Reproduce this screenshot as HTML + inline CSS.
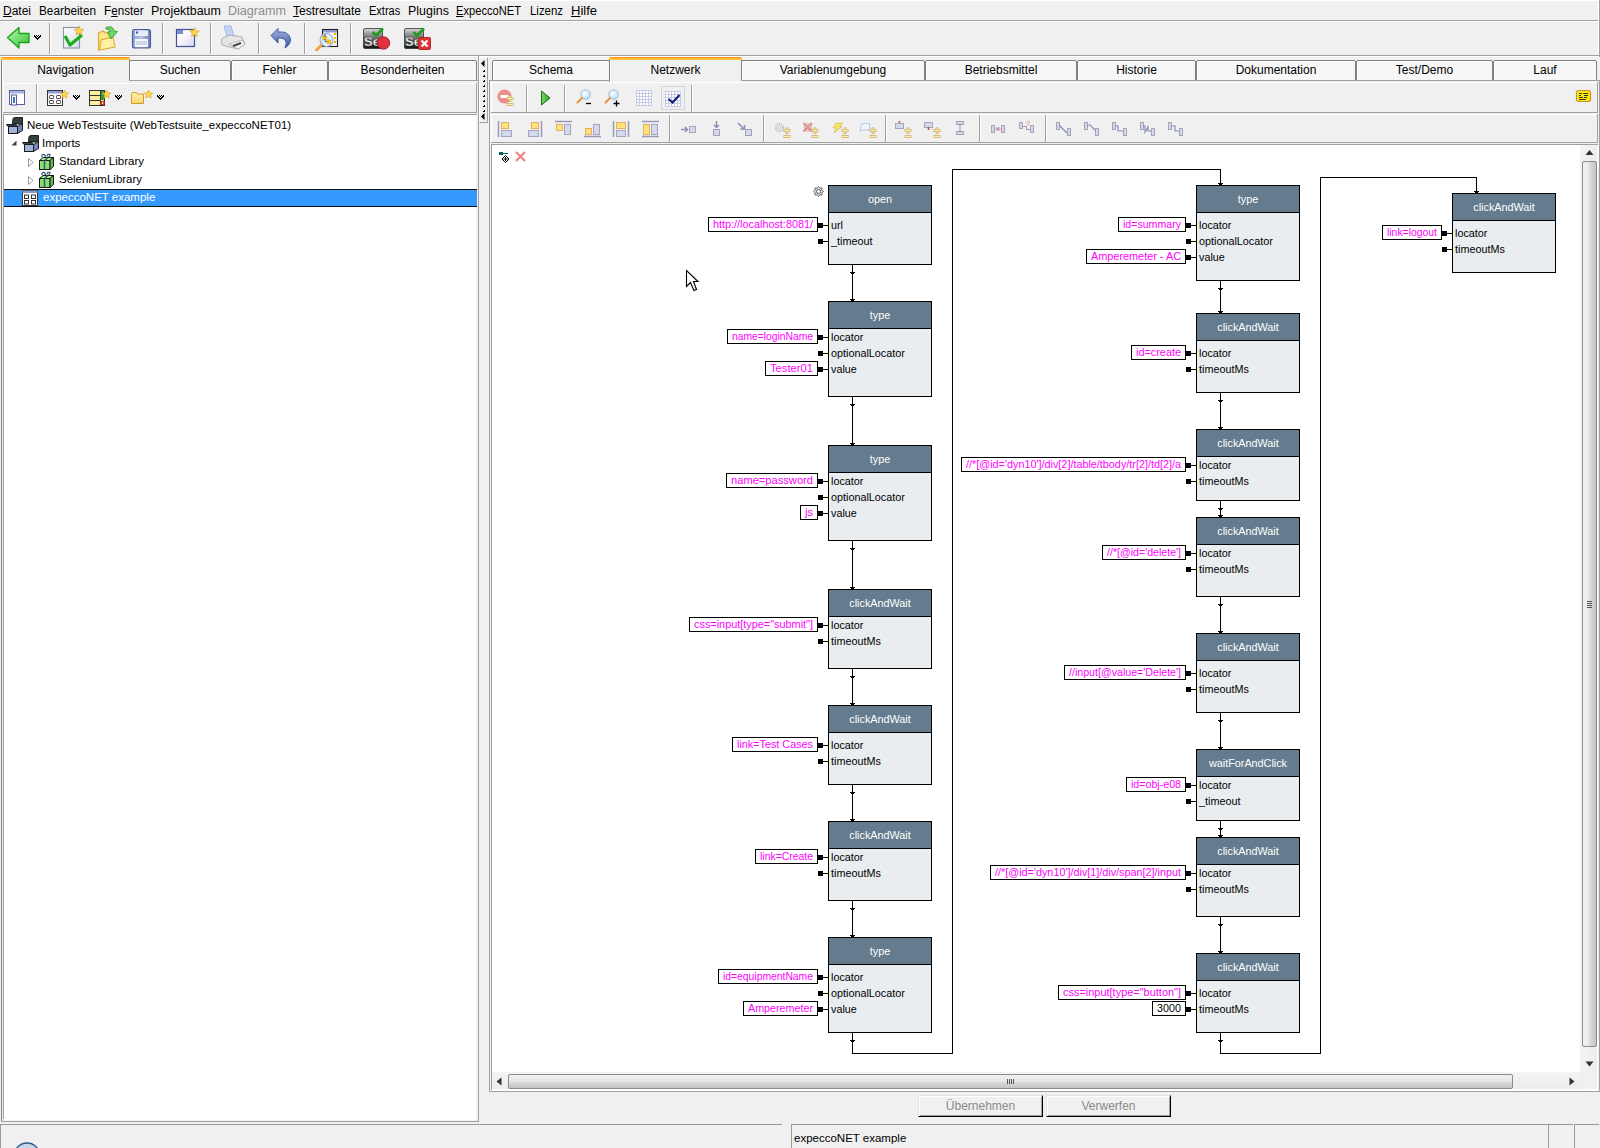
<!DOCTYPE html><html><head><meta charset="utf-8"><style>
*{margin:0;padding:0;box-sizing:border-box}
html,body{width:1600px;height:1148px;overflow:hidden;background:#f0f0f0}
body{position:relative;font-family:"Liberation Sans",sans-serif;font-size:11.5px;color:#000}
div{position:absolute}
.t{white-space:pre;line-height:14px}
svg{position:absolute;left:0;top:0;overflow:visible}
u{text-decoration:underline}
.mn{font-size:11.6px}
</style></head><body>
<div style="left:0px;top:0px;width:1600px;height:1px;background:#fff"></div>
<div style="left:0px;top:20px;width:1600px;height:1px;background:#a0a0a0"></div>
<div style="left:0px;top:21px;width:1600px;height:1px;background:#fff"></div>
<div style="left:3px;top:3px;width:200px;height:16px;line-height:16px;white-space:pre;font-size:12px;transform-origin:0 0;transform:scaleX(1.0)"><u>D</u>atei</div>
<div style="left:39px;top:3px;width:200px;height:16px;line-height:16px;white-space:pre;font-size:12px;transform-origin:0 0;transform:scaleX(0.982)">Bearbeiten</div>
<div style="left:104px;top:3px;width:200px;height:16px;line-height:16px;white-space:pre;font-size:12px;transform-origin:0 0;transform:scaleX(0.974)">F<u>e</u>nster</div>
<div style="left:151px;top:3px;width:200px;height:16px;line-height:16px;white-space:pre;font-size:12px;transform-origin:0 0;transform:scaleX(1.038)">Projektbaum</div>
<div style="left:228px;top:3px;width:200px;height:16px;line-height:16px;white-space:pre;font-size:12px;transform-origin:0 0;transform:scaleX(1.047)"><span style="color:#8d8d8d">Diagramm</span></div>
<div style="left:293px;top:3px;width:200px;height:16px;line-height:16px;white-space:pre;font-size:12px;transform-origin:0 0;transform:scaleX(1.0)"><u>T</u>estresultate</div>
<div style="left:369px;top:3px;width:200px;height:16px;line-height:16px;white-space:pre;font-size:12px;transform-origin:0 0;transform:scaleX(0.919)">Extras</div>
<div style="left:408px;top:3px;width:200px;height:16px;line-height:16px;white-space:pre;font-size:12px;transform-origin:0 0;transform:scaleX(1.038)">Plugins</div>
<div style="left:456px;top:3px;width:200px;height:16px;line-height:16px;white-space:pre;font-size:12px;transform-origin:0 0;transform:scaleX(0.928)"><u>E</u>xpeccoNET</div>
<div style="left:530px;top:3px;width:200px;height:16px;line-height:16px;white-space:pre;font-size:12px;transform-origin:0 0;transform:scaleX(0.951)">Lizenz</div>
<div style="left:571px;top:3px;width:200px;height:16px;line-height:16px;white-space:pre;font-size:12px;transform-origin:0 0;transform:scaleX(1.087)"><u>H</u>ilfe</div>
<div style="left:0px;top:55px;width:1600px;height:1px;background:#a0a0a0"></div>
<div style="left:0px;top:56px;width:1600px;height:1px;background:#fff"></div>
<div style="left:1599px;top:0px;width:1px;height:57px;background:#a0a0a0"></div>
<div style="left:1598px;top:1px;width:1px;height:54px;background:#fff"></div>
<div style="left:49px;top:23px;width:1px;height:31px;background:#a0a0a0"></div>
<div style="left:50px;top:23px;width:1px;height:31px;background:#fff"></div>
<div style="left:162px;top:23px;width:1px;height:31px;background:#a0a0a0"></div>
<div style="left:163px;top:23px;width:1px;height:31px;background:#fff"></div>
<div style="left:210px;top:23px;width:1px;height:31px;background:#a0a0a0"></div>
<div style="left:211px;top:23px;width:1px;height:31px;background:#fff"></div>
<div style="left:258px;top:23px;width:1px;height:31px;background:#a0a0a0"></div>
<div style="left:259px;top:23px;width:1px;height:31px;background:#fff"></div>
<div style="left:304px;top:23px;width:1px;height:31px;background:#a0a0a0"></div>
<div style="left:305px;top:23px;width:1px;height:31px;background:#fff"></div>
<div style="left:350px;top:23px;width:1px;height:31px;background:#a0a0a0"></div>
<div style="left:351px;top:23px;width:1px;height:31px;background:#fff"></div>
<svg style="left:6px;top:26px" width="25" height="25" viewBox="0 0 25 25"><defs><linearGradient id="ga" x1="0" y1="0" x2="1" y2="1"><stop offset="0" stop-color="#b8f5b0"/><stop offset="0.6" stop-color="#6cd868"/><stop offset="1" stop-color="#3cbc3a"/></linearGradient></defs><path d="M1.5 11.5 L13 1.5 L13 7.5 L23 7.5 L23 16.5 L13 16.5 L13 22 Z" fill="url(#ga)" stroke="#14a414" stroke-width="1.3" stroke-linejoin="round"/></svg>
<svg style="left:34px;top:35px" width="7" height="5" viewBox="0 0 7 5"><path d="M0 0h1v1h-1zM2 0h1v1h-1zM4 0h1v1h-1zM6 0h1v1h-1zM0 1h1v1h-1zM1 1h1v1h-1zM3 1h1v1h-1zM5 1h1v1h-1zM6 1h1v1h-1zM1 2h1v1h-1zM2 2h1v1h-1zM4 2h1v1h-1zM5 2h1v1h-1zM2 3h1v1h-1zM3 3h1v1h-1zM4 3h1v1h-1zM3 4h1v1h-1z" fill="#000" shape-rendering="crispEdges"/></svg>
<svg style="left:62px;top:26px" width="24" height="24" viewBox="0 0 24 24"><defs><linearGradient id="gd" x1="0" y1="0" x2="1" y2="1"><stop offset="0" stop-color="#ffffff"/><stop offset="1" stop-color="#dcdcea"/></linearGradient></defs><rect x="1.5" y="1.5" width="16" height="20.5" fill="url(#gd)" stroke="#7f97ad" stroke-width="1.1"/><path d="M3 10 L8 19 L20 9" stroke="#19b019" stroke-width="3.2" fill="none" stroke-linejoin="round"/><polygon points="17.0,0.0 18.3,3.2 21.8,3.5 19.1,5.7 19.9,9.0 17.0,7.2 14.1,9.0 14.9,5.7 12.2,3.5 15.7,3.2" fill="#ffd84a" stroke="#e0a020" stroke-width="0.7"/></svg>
<svg style="left:97px;top:25px" width="24" height="26" viewBox="0 0 24 26"><path d="M1.5 8 L6 6 L9 8 L14 8 L15 20 L1.5 25 Z" fill="#fce58a" stroke="#e0aa30" stroke-width="1.1"/><path d="M2.5 25 L4 15 L16 12 L18 22 Z" fill="#fff0a8" stroke="#e0aa30" stroke-width="1.1"/><path d="M9 2.5 Q16 0 17 6 L20.5 6.5 L14 14 L10.5 7 L13.5 6.5 Q13 3.5 9 4 Z" fill="#6fd66a" stroke="#2c9a2a" stroke-width="0.9"/></svg>
<svg style="left:131px;top:28px" width="22" height="22" viewBox="0 0 22 22"><defs><linearGradient id="gs" x1="0" y1="0" x2="1" y2="0"><stop offset="0" stop-color="#8fa0d0"/><stop offset="0.5" stop-color="#b4c0e4"/><stop offset="1" stop-color="#6a7cb8"/></linearGradient></defs><rect x="1.5" y="1.5" width="18" height="18.5" rx="2" fill="url(#gs)" stroke="#4a5c98" stroke-width="1.1"/><rect x="4" y="2.5" width="13" height="5.5" fill="#e8ecf8"/><rect x="5" y="3.5" width="2" height="2" fill="#3a4c90"/><rect x="4" y="11" width="13" height="8" fill="#f4f6fc"/><path d="M5 14h11M5 16h11" stroke="#9aa8c8" stroke-width="0.8"/></svg>
<svg style="left:175px;top:27px" width="25" height="22" viewBox="0 0 25 22"><defs><linearGradient id="gw" x1="0" y1="0" x2="1" y2="1"><stop offset="0.4" stop-color="#fdf8fb"/><stop offset="1" stop-color="#d8d4ec"/></linearGradient></defs><rect x="1.5" y="2.5" width="18" height="17" fill="url(#gw)" stroke="#3f55a0" stroke-width="1.2"/><rect x="2" y="3" width="6" height="4" fill="#7a8cc4"/><polygon points="19.5,0.5 20.8,3.7 24.3,4.0 21.6,6.2 22.4,9.5 19.5,7.8 16.6,9.5 17.4,6.2 14.7,4.0 18.2,3.7" fill="#ffd84a" stroke="#e0a020" stroke-width="0.7"/></svg>
<svg style="left:220px;top:25px" width="27" height="26" viewBox="0 0 27 26"><path d="M4 1 L11 1 L14 11 L7 11 Z" fill="#c4d4f4" stroke="#9ab0d8" stroke-width="0.8"/><path d="M1.5 14 L9 10 L22 12 L25 19 L18 24 L2 20 Z" fill="#e6e6e6" stroke="#a8a8a8" stroke-width="0.9"/><path d="M9 19 L22 15 L25 19 L18 24 Z" fill="#f4f4f4" stroke="#a8a8a8" stroke-width="0.8"/><path d="M13 21 L21 18" stroke="#444" stroke-width="2"/></svg>
<svg style="left:270px;top:27px" width="23" height="23" viewBox="0 0 23 23"><defs><linearGradient id="gu" x1="0" y1="0" x2="0" y2="1"><stop offset="0" stop-color="#a8b8e4"/><stop offset="1" stop-color="#3a52a0"/></linearGradient></defs><path d="M1 8.5 L8 1.5 L8 5 Q19 4 20.5 12 Q21 17 15 21 Q17.5 16 15 12.5 Q12.5 10.5 8 11 L8 16 Z" fill="url(#gu)" stroke="#34509a" stroke-width="0.9" stroke-linejoin="round"/></svg>
<svg style="left:314px;top:27px" width="26" height="25" viewBox="0 0 26 25"><rect x="8.5" y="2.5" width="15" height="17" fill="#f8f8f8" stroke="#222" stroke-width="1.1"/><rect x="9" y="3" width="14" height="2.5" fill="#8a9ad0"/><rect x="20" y="6" width="2" height="2" fill="#f2b800"/><rect x="20" y="10" width="2" height="2" fill="#f2b800"/><rect x="20" y="14" width="2" height="2" fill="#f2b800"/><circle cx="12.5" cy="13" r="6.5" fill="#d8f0fa" fill-opacity="0.9" stroke="#a0a8e0" stroke-width="1.2"/><rect x="9" y="9" width="3.5" height="3.5" fill="#f8c800" stroke="#c89a00" stroke-width="0.5"/><rect x="13" y="13" width="3.5" height="3.5" fill="#f8c800" stroke="#c89a00" stroke-width="0.5"/><path d="M11 7 V10 M11 12 V14.5 H13" stroke="#333" stroke-width="0.7" fill="none"/><path d="M7 18.5 L2.5 23" stroke="#f0a040" stroke-width="2.8" stroke-linecap="round"/></svg>
<svg style="left:362px;top:27px" width="30" height="24" viewBox="0 0 30 24"><defs><linearGradient id="gse" x1="0" y1="0" x2="0" y2="1"><stop offset="0" stop-color="#d8d8d8"/><stop offset="0.45" stop-color="#707070"/><stop offset="1" stop-color="#141414"/></linearGradient></defs><rect x="1.5" y="1.5" width="19" height="20" rx="1.5" fill="url(#gse)" stroke="#333" stroke-width="0.8"/><text x="2" y="19" font-family="Liberation Sans" font-weight="bold" font-size="13" fill="#fff" stroke="#222" stroke-width="0.3">Se</text><path d="M10.5 5 L14 8.5 L21 1.5" stroke="#1ea01e" stroke-width="2.8" fill="none"/><circle cx="21.5" cy="16" r="6.2" fill="#e2303e" stroke="#a01c28" stroke-width="0.9"/></svg>
<svg style="left:403px;top:27px" width="30" height="24" viewBox="0 0 30 24"><defs><linearGradient id="gse2" x1="0" y1="0" x2="0" y2="1"><stop offset="0" stop-color="#d8d8d8"/><stop offset="0.45" stop-color="#707070"/><stop offset="1" stop-color="#141414"/></linearGradient></defs><rect x="1.5" y="1.5" width="19" height="20" rx="1.5" fill="url(#gse2)" stroke="#333" stroke-width="0.8"/><text x="2" y="19" font-family="Liberation Sans" font-weight="bold" font-size="13" fill="#fff" stroke="#222" stroke-width="0.3">Se</text><path d="M10.5 5 L14 8.5 L21 1.5" stroke="#1ea01e" stroke-width="2.8" fill="none"/><rect x="15.5" y="10.5" width="12" height="12" rx="1" fill="#e03434" stroke="#a82020" stroke-width="0.9"/><path d="M18.5 13.5 L24.5 19.5 M24.5 13.5 L18.5 19.5" stroke="#fff" stroke-width="2.2"/></svg>
<div style="left:129px;top:60px;width:102px;height:21px;background:#f7f7f7;border:1px solid #808080;border-radius:2px 2px 0 0;box-shadow:inset 1px 1px 0 #fff"></div>
<div style="left:129px;top:62px;width:102px;height:16px;text-align:center;line-height:16px;white-space:pre;font-size:12px">Suchen</div>
<div style="left:231px;top:60px;width:97px;height:21px;background:#f7f7f7;border:1px solid #808080;border-radius:2px 2px 0 0;box-shadow:inset 1px 1px 0 #fff"></div>
<div style="left:231px;top:62px;width:97px;height:16px;text-align:center;line-height:16px;white-space:pre;font-size:12px">Fehler</div>
<div style="left:328px;top:60px;width:149px;height:21px;background:#f7f7f7;border:1px solid #808080;border-radius:2px 2px 0 0;box-shadow:inset 1px 1px 0 #fff"></div>
<div style="left:328px;top:62px;width:149px;height:16px;text-align:center;line-height:16px;white-space:pre;font-size:12px">Besonderheiten</div>
<div style="left:1px;top:57px;width:129px;height:25px;background:#f0f0f0"></div>
<div style="left:2px;top:57px;width:127px;height:1px;background:#ff8a1f"></div>
<div style="left:1px;top:58px;width:129px;height:2px;background:#ffc233"></div>
<div style="left:1px;top:60px;width:1px;height:22px;background:#808080"></div>
<div style="left:2px;top:60px;width:1px;height:22px;background:#fafafa"></div>
<div style="left:129px;top:60px;width:1px;height:21px;background:#808080"></div>
<div style="left:1px;top:62px;width:129px;height:16px;text-align:center;line-height:16px;white-space:pre;font-size:12px">Navigation</div>
<div style="left:1px;top:80px;width:1px;height:1042px;background:#808080"></div>
<div style="left:478px;top:56px;width:1px;height:1066px;background:#a0a0a0"></div>
<div style="left:1px;top:1121px;width:478px;height:1px;background:#a0a0a0"></div>
<div style="left:129px;top:80px;width:350px;height:1px;background:#a0a0a0"></div>
<div style="left:3px;top:83px;width:474px;height:1px;background:#fff"></div>
<div style="left:3px;top:112px;width:474px;height:1px;background:#a0a0a0"></div>
<div style="left:476px;top:83px;width:1px;height:30px;background:#a0a0a0"></div>
<div style="left:3px;top:83px;width:1px;height:29px;background:#fff"></div>
<div style="left:36px;top:84px;width:1px;height:28px;background:#a0a0a0"></div>
<div style="left:37px;top:84px;width:1px;height:28px;background:#fff"></div>
<svg style="left:9px;top:90px" width="17" height="17" viewBox="0 0 17 17"><rect x="0.5" y="0.5" width="15" height="14" fill="#fff" stroke="#5f5f98"/><rect x="1" y="1" width="14" height="2.5" fill="#a8b4dc"/><rect x="2.5" y="5" width="5" height="10" fill="#fff" stroke="#5f5f98"/><rect x="4" y="7" width="2" height="6" fill="#3a70c8"/></svg>
<svg style="left:47px;top:90px" width="22" height="17" viewBox="0 0 22 17"><rect x="0.5" y="0.5" width="15" height="15" fill="#fff" stroke="#333"/><rect x="1" y="1" width="14" height="2.5" fill="#8a9ed8"/><rect x="2.5" y="5.5" width="4" height="3" rx="0.8" fill="none" stroke="#333"/><rect x="9.5" y="5.5" width="4" height="3" rx="0.8" fill="none" stroke="#333"/><rect x="2.5" y="10.5" width="4" height="3" rx="0.8" fill="none" stroke="#333"/><rect x="9.5" y="10.5" width="4" height="3" rx="0.8" fill="none" stroke="#333"/><polygon points="17.5,0.0 18.7,2.9 21.8,3.1 19.4,5.1 20.1,8.1 17.5,6.5 14.9,8.1 15.6,5.1 13.2,3.1 16.3,2.9" fill="#ffd84a" stroke="#e0a020" stroke-width="0.7"/></svg>
<svg style="left:73px;top:95px" width="7" height="5" viewBox="0 0 7 5"><path d="M0 0h1v1h-1zM2 0h1v1h-1zM4 0h1v1h-1zM6 0h1v1h-1zM0 1h1v1h-1zM1 1h1v1h-1zM3 1h1v1h-1zM5 1h1v1h-1zM6 1h1v1h-1zM1 2h1v1h-1zM2 2h1v1h-1zM4 2h1v1h-1zM5 2h1v1h-1zM2 3h1v1h-1zM3 3h1v1h-1zM4 3h1v1h-1zM3 4h1v1h-1z" fill="#000" shape-rendering="crispEdges"/></svg>
<svg style="left:89px;top:90px" width="22" height="17" viewBox="0 0 22 17"><rect x="0.5" y="0.5" width="15" height="15" fill="#fbf0a0" stroke="#333"/><path d="M0.5 5.5h11M0.5 10.5h11M11.5 0.5v15" stroke="#333"/><rect x="12" y="1" width="3" height="9" fill="#2ca02c"/><circle cx="13.5" cy="13" r="1.6" fill="none" stroke="#e02020" stroke-width="1.2"/><polygon points="17.5,0.0 18.7,2.9 21.8,3.1 19.4,5.1 20.1,8.1 17.5,6.5 14.9,8.1 15.6,5.1 13.2,3.1 16.3,2.9" fill="#ffd84a" stroke="#e0a020" stroke-width="0.7"/></svg>
<svg style="left:115px;top:95px" width="7" height="5" viewBox="0 0 7 5"><path d="M0 0h1v1h-1zM2 0h1v1h-1zM4 0h1v1h-1zM6 0h1v1h-1zM0 1h1v1h-1zM1 1h1v1h-1zM3 1h1v1h-1zM5 1h1v1h-1zM6 1h1v1h-1zM1 2h1v1h-1zM2 2h1v1h-1zM4 2h1v1h-1zM5 2h1v1h-1zM2 3h1v1h-1zM3 3h1v1h-1zM4 3h1v1h-1zM3 4h1v1h-1z" fill="#000" shape-rendering="crispEdges"/></svg>
<svg style="left:131px;top:90px" width="23" height="17" viewBox="0 0 23 17"><defs><linearGradient id="gf" x1="0" y1="0" x2="0" y2="1"><stop offset="0" stop-color="#fff4b0"/><stop offset="1" stop-color="#f5d36a"/></linearGradient></defs><path d="M0.5 4 L1.5 2.5 L5.5 2.5 L6.5 4 L12.5 4 L12.5 13.5 L0.5 13.5 Z" fill="url(#gf)" stroke="#d29a2a"/><polygon points="17.5,0.0 18.7,2.9 21.8,3.1 19.4,5.1 20.1,8.1 17.5,6.5 14.9,8.1 15.6,5.1 13.2,3.1 16.3,2.9" fill="#ffd84a" stroke="#e0a020" stroke-width="0.7"/></svg>
<svg style="left:157px;top:95px" width="7" height="5" viewBox="0 0 7 5"><path d="M0 0h1v1h-1zM2 0h1v1h-1zM4 0h1v1h-1zM6 0h1v1h-1zM0 1h1v1h-1zM1 1h1v1h-1zM3 1h1v1h-1zM5 1h1v1h-1zM6 1h1v1h-1zM1 2h1v1h-1zM2 2h1v1h-1zM4 2h1v1h-1zM5 2h1v1h-1zM2 3h1v1h-1zM3 3h1v1h-1zM4 3h1v1h-1zM3 4h1v1h-1z" fill="#000" shape-rendering="crispEdges"/></svg>
<div style="left:4px;top:115px;width:472px;height:1004px;background:#fff"></div>
<div style="left:3px;top:114px;width:474px;height:1px;background:#a0a0a0"></div>
<div style="left:3px;top:114px;width:1px;height:1006px;background:#a0a0a0"></div>
<div style="left:3px;top:1119px;width:474px;height:1px;background:#fcfcfc"></div>
<svg style="left:6px;top:117px" width="18" height="18" viewBox="0 0 18 18"><path d="M7 1.5 L8.5 0.5 H16.5 V7 H6.5 Z" fill="#34403f" stroke="#1a1a1a" stroke-width="1"/><path d="M0.5 7.5 H10 L11.5 9.5 H2 Z" fill="#3c4848" stroke="#1a1a1a" stroke-width="1"/><rect x="2.5" y="9.5" width="9" height="7" fill="#a4b4d8" stroke="#1a1a1a" stroke-width="1"/><path d="M11.5 9.5 L16.5 6.5 V13.5 L11.5 16.5 Z" fill="#7088bc" stroke="#1a1a1a" stroke-width="1"/></svg>
<div style="left:27px;top:118px;width:300px;height:14px;line-height:14px;white-space:pre">Neue WebTestsuite (WebTestsuite_expeccoNET01)</div>
<svg style="left:11px;top:140px" width="6" height="6" viewBox="0 0 6 6"><path d="M5.5 0.5 L5.5 5.5 L0.5 5.5 Z" fill="#404040"/></svg>
<svg style="left:22px;top:135px" width="18" height="18" viewBox="0 0 18 18"><path d="M7 1.5 L8.5 0.5 H16.5 V7 H6.5 Z" fill="#34403f" stroke="#1a1a1a" stroke-width="1"/><path d="M0.5 7.5 H10 L11.5 9.5 H2 Z" fill="#3c4848" stroke="#1a1a1a" stroke-width="1"/><rect x="2.5" y="9.5" width="9" height="7" fill="#a4b4d8" stroke="#1a1a1a" stroke-width="1"/><path d="M11.5 9.5 L16.5 6.5 V13.5 L11.5 16.5 Z" fill="#7088bc" stroke="#1a1a1a" stroke-width="1"/></svg>
<div style="left:42px;top:136px;width:300px;height:14px;line-height:14px;white-space:pre">Imports</div>
<svg style="left:28px;top:158px" width="6" height="10" viewBox="0 0 6 10"><path d="M0.5 0.5 L5 4.5 L0.5 8.5 Z" fill="#fff" stroke="#9a9a9a"/></svg>
<svg style="left:39px;top:153px" width="16" height="18" viewBox="0 0 16 18"><path d="M0.5 7.5 L4 4.5 H14.5 L11 7.5 Z" fill="#a8f090" stroke="#1a1a1a"/><rect x="0.5" y="7.5" width="10.5" height="9" fill="#88e070" stroke="#1a1a1a"/><path d="M11 7.5 L14.5 4.5 V13.5 L11 16.5 Z" fill="#60c050" stroke="#1a1a1a"/><path d="M5.5 7.5 V16.5 M5.5 7.5 L9 4.5" stroke="#3a5a78" stroke-width="1.6"/><path d="M3 4 Q2.5 0.5 5.5 1.5 L6.5 4 M8 3.5 Q8.5 0 11 1.5 L10 4" stroke="#3a5a78" stroke-width="1.3" fill="none"/></svg>
<div style="left:59px;top:154px;width:300px;height:14px;line-height:14px;white-space:pre">Standard Library</div>
<svg style="left:28px;top:176px" width="6" height="10" viewBox="0 0 6 10"><path d="M0.5 0.5 L5 4.5 L0.5 8.5 Z" fill="#fff" stroke="#9a9a9a"/></svg>
<svg style="left:39px;top:171px" width="16" height="18" viewBox="0 0 16 18"><path d="M0.5 7.5 L4 4.5 H14.5 L11 7.5 Z" fill="#a8f090" stroke="#1a1a1a"/><rect x="0.5" y="7.5" width="10.5" height="9" fill="#88e070" stroke="#1a1a1a"/><path d="M11 7.5 L14.5 4.5 V13.5 L11 16.5 Z" fill="#60c050" stroke="#1a1a1a"/><path d="M5.5 7.5 V16.5 M5.5 7.5 L9 4.5" stroke="#3a5a78" stroke-width="1.6"/><path d="M3 4 Q2.5 0.5 5.5 1.5 L6.5 4 M8 3.5 Q8.5 0 11 1.5 L10 4" stroke="#3a5a78" stroke-width="1.3" fill="none"/></svg>
<div style="left:59px;top:172px;width:300px;height:14px;line-height:14px;white-space:pre">SeleniumLibrary</div>
<div style="left:4px;top:189px;width:473px;height:18px;background:#3399ff;border-top:1px solid #111;border-bottom:1px solid #111"></div>
<svg style="left:22px;top:190px" width="16" height="16" viewBox="0 0 16 16"><rect x="0.5" y="0.5" width="15" height="15" fill="#fff" stroke="#333"/><rect x="0.5" y="0.5" width="15" height="2.5" fill="#8a9ac8"/><rect x="2.5" y="5" width="4" height="3.5" fill="none" stroke="#333"/><rect x="9.5" y="5" width="4" height="3.5" fill="none" stroke="#333"/><rect x="2.5" y="10.5" width="4" height="3.5" fill="none" stroke="#333"/><rect x="9.5" y="10.5" width="4" height="3.5" fill="none" stroke="#333"/></svg>
<div style="left:43px;top:190px;width:300px;height:14px;line-height:14px;white-space:pre;color:#fff">expeccoNET example</div>
<div style="left:479px;top:57px;width:9px;height:66px;background:#f0f0f0;border-left:1px solid #fff;border-top:1px solid #fff;border-right:1px solid #a0a0a0;border-bottom:1px solid #a0a0a0"></div>
<svg style="left:480px;top:60px" width="7" height="62" viewBox="0 0 7 62"><path d="M4.5 0 L1 3.5 L4.5 7 Z" fill="#000"/><path d="M4.5 53 L1 56.5 L4.5 60 Z" fill="#000"/><rect x="4" y="10" width="1" height="1" fill="#000"/><rect x="3" y="11" width="2" height="1" fill="#000"/><rect x="4" y="15" width="1" height="1" fill="#000"/><rect x="3" y="16" width="2" height="1" fill="#000"/><rect x="4" y="20" width="1" height="1" fill="#000"/><rect x="3" y="21" width="2" height="1" fill="#000"/><rect x="4" y="25" width="1" height="1" fill="#000"/><rect x="3" y="26" width="2" height="1" fill="#000"/><rect x="4" y="30" width="1" height="1" fill="#000"/><rect x="3" y="31" width="2" height="1" fill="#000"/><rect x="4" y="35" width="1" height="1" fill="#000"/><rect x="3" y="36" width="2" height="1" fill="#000"/><rect x="4" y="40" width="1" height="1" fill="#000"/><rect x="3" y="41" width="2" height="1" fill="#000"/><rect x="4" y="45" width="1" height="1" fill="#000"/><rect x="3" y="46" width="2" height="1" fill="#000"/><rect x="4" y="50" width="1" height="1" fill="#000"/><rect x="3" y="51" width="2" height="1" fill="#000"/></svg>
<div style="left:492px;top:60px;width:118px;height:21px;background:#f7f7f7;border:1px solid #808080;border-radius:2px 2px 0 0;box-shadow:inset 1px 1px 0 #fff"></div>
<div style="left:492px;top:62px;width:118px;height:16px;text-align:center;line-height:16px;white-space:pre;font-size:12px">Schema</div>
<div style="left:741px;top:60px;width:184px;height:21px;background:#f7f7f7;border:1px solid #808080;border-radius:2px 2px 0 0;box-shadow:inset 1px 1px 0 #fff"></div>
<div style="left:741px;top:62px;width:184px;height:16px;text-align:center;line-height:16px;white-space:pre;font-size:12px">Variablenumgebung</div>
<div style="left:925px;top:60px;width:152px;height:21px;background:#f7f7f7;border:1px solid #808080;border-radius:2px 2px 0 0;box-shadow:inset 1px 1px 0 #fff"></div>
<div style="left:925px;top:62px;width:152px;height:16px;text-align:center;line-height:16px;white-space:pre;font-size:12px">Betriebsmittel</div>
<div style="left:1077px;top:60px;width:119px;height:21px;background:#f7f7f7;border:1px solid #808080;border-radius:2px 2px 0 0;box-shadow:inset 1px 1px 0 #fff"></div>
<div style="left:1077px;top:62px;width:119px;height:16px;text-align:center;line-height:16px;white-space:pre;font-size:12px">Historie</div>
<div style="left:1196px;top:60px;width:160px;height:21px;background:#f7f7f7;border:1px solid #808080;border-radius:2px 2px 0 0;box-shadow:inset 1px 1px 0 #fff"></div>
<div style="left:1196px;top:62px;width:160px;height:16px;text-align:center;line-height:16px;white-space:pre;font-size:12px">Dokumentation</div>
<div style="left:1356px;top:60px;width:137px;height:21px;background:#f7f7f7;border:1px solid #808080;border-radius:2px 2px 0 0;box-shadow:inset 1px 1px 0 #fff"></div>
<div style="left:1356px;top:62px;width:137px;height:16px;text-align:center;line-height:16px;white-space:pre;font-size:12px">Test/Demo</div>
<div style="left:1493px;top:60px;width:104px;height:21px;background:#f7f7f7;border:1px solid #808080;border-radius:2px 2px 0 0;box-shadow:inset 1px 1px 0 #fff"></div>
<div style="left:1493px;top:62px;width:104px;height:16px;text-align:center;line-height:16px;white-space:pre;font-size:12px">Lauf</div>
<div style="left:609px;top:57px;width:133px;height:25px;background:#f0f0f0"></div>
<div style="left:610px;top:57px;width:131px;height:1px;background:#ff8a1f"></div>
<div style="left:609px;top:58px;width:133px;height:2px;background:#ffc233"></div>
<div style="left:609px;top:60px;width:1px;height:22px;background:#808080"></div>
<div style="left:610px;top:60px;width:1px;height:22px;background:#fafafa"></div>
<div style="left:741px;top:60px;width:1px;height:21px;background:#808080"></div>
<div style="left:609px;top:62px;width:133px;height:16px;text-align:center;line-height:16px;white-space:pre;font-size:12px">Netzwerk</div>
<div style="left:489px;top:80px;width:1px;height:1012px;background:#a0a0a0"></div>
<div style="left:1599px;top:80px;width:1px;height:1012px;background:#a0a0a0"></div>
<div style="left:489px;top:1091px;width:1111px;height:1px;background:#a0a0a0"></div>
<div style="left:489px;top:80px;width:121px;height:1px;background:#a0a0a0"></div>
<div style="left:741px;top:80px;width:859px;height:1px;background:#a0a0a0"></div>
<div style="left:491px;top:82px;width:1107px;height:1px;background:#fff"></div>
<div style="left:491px;top:82px;width:1px;height:31px;background:#fff"></div>
<div style="left:491px;top:112px;width:1107px;height:1px;background:#a0a0a0"></div>
<div style="left:1597px;top:82px;width:1px;height:31px;background:#a0a0a0"></div>
<div style="left:526px;top:85px;width:1px;height:27px;background:#a0a0a0"></div>
<div style="left:527px;top:85px;width:1px;height:27px;background:#fff"></div>
<div style="left:564px;top:85px;width:1px;height:27px;background:#a0a0a0"></div>
<div style="left:565px;top:85px;width:1px;height:27px;background:#fff"></div>
<div style="left:691px;top:85px;width:1px;height:27px;background:#a0a0a0"></div>
<div style="left:692px;top:85px;width:1px;height:27px;background:#fff"></div>
<svg style="left:497px;top:89px" width="18" height="18" viewBox="0 0 18 18"><circle cx="7.5" cy="7.5" r="7" fill="#ec8c8c"/><rect x="3.5" y="6" width="8" height="3" fill="#fff"/><g transform="translate(9,6)"><path d="M4 0.5 V7 M0.5 3.5 H7.5 M0.5 9.5 H7.5" stroke="#c8a860" stroke-width="2.6"/><path d="M4 1 V6.5 M1 3.5 H7 M1 9.5 H7" stroke="#fff0a8" stroke-width="1.1"/></g></svg>
<svg style="left:540px;top:90px" width="12" height="16" viewBox="0 0 12 16"><defs><linearGradient id="gp" x1="0" y1="0" x2="1" y2="0"><stop offset="0" stop-color="#7ad860"/><stop offset="1" stop-color="#28a028"/></linearGradient></defs><path d="M1.5 1 L10 8 L1.5 15 Z" fill="url(#gp)" stroke="#1c6a1c" stroke-width="1"/></svg>
<svg style="left:575px;top:88px" width="18" height="18" viewBox="0 0 18 18"><defs><radialGradient id="gz" cx="0.4" cy="0.35" r="0.7"><stop offset="0" stop-color="#ffffff"/><stop offset="1" stop-color="#b8e0f8"/></radialGradient></defs><circle cx="10.5" cy="6.5" r="4.6" fill="url(#gz)" stroke="#a4c4e4" stroke-width="1.3"/><path d="M7 10 L2.5 14.5" stroke="#e89838" stroke-width="2.2" stroke-linecap="round"/><path d="M11 15.5 H16" stroke="#000" stroke-width="1.3"/></svg>
<svg style="left:603px;top:88px" width="18" height="18" viewBox="0 0 18 18"><defs><radialGradient id="gz2" cx="0.4" cy="0.35" r="0.7"><stop offset="0" stop-color="#ffffff"/><stop offset="1" stop-color="#b8e0f8"/></radialGradient></defs><circle cx="10.5" cy="6.5" r="4.6" fill="url(#gz2)" stroke="#a4c4e4" stroke-width="1.3"/><path d="M7 10 L2.5 14.5" stroke="#e89838" stroke-width="2.2" stroke-linecap="round"/><path d="M10.5 15.5 H16.5 M13.5 12.5 V18.5" stroke="#000" stroke-width="1.3"/></svg>
<svg style="left:636px;top:90px" width="16" height="16" viewBox="0 0 16 16"><rect x="0" y="0" width="16" height="16" fill="#c4cce4"/><rect x="1" y="1" width="2" height="2" fill="#fff"/><rect x="1" y="4" width="2" height="2" fill="#fff"/><rect x="1" y="7" width="2" height="2" fill="#fff"/><rect x="1" y="10" width="2" height="2" fill="#fff"/><rect x="1" y="13" width="2" height="2" fill="#fff"/><rect x="4" y="1" width="2" height="2" fill="#fff"/><rect x="4" y="4" width="2" height="2" fill="#fff"/><rect x="4" y="7" width="2" height="2" fill="#fff"/><rect x="4" y="10" width="2" height="2" fill="#fff"/><rect x="4" y="13" width="2" height="2" fill="#fff"/><rect x="7" y="1" width="2" height="2" fill="#fff"/><rect x="7" y="4" width="2" height="2" fill="#fff"/><rect x="7" y="7" width="2" height="2" fill="#fff"/><rect x="7" y="10" width="2" height="2" fill="#fff"/><rect x="7" y="13" width="2" height="2" fill="#fff"/><rect x="10" y="1" width="2" height="2" fill="#fff"/><rect x="10" y="4" width="2" height="2" fill="#fff"/><rect x="10" y="7" width="2" height="2" fill="#fff"/><rect x="10" y="10" width="2" height="2" fill="#fff"/><rect x="10" y="13" width="2" height="2" fill="#fff"/><rect x="13" y="1" width="2" height="2" fill="#fff"/><rect x="13" y="4" width="2" height="2" fill="#fff"/><rect x="13" y="7" width="2" height="2" fill="#fff"/><rect x="13" y="10" width="2" height="2" fill="#fff"/><rect x="13" y="13" width="2" height="2" fill="#fff"/></svg>
<div style="left:661px;top:86px;width:24px;height:24px;border:1px solid #d4d4d4"></div>
<svg style="left:665px;top:91px" width="16" height="16" viewBox="0 0 16 16"><rect x="0" y="0" width="16" height="16" fill="#c4cce4"/><rect x="1" y="1" width="2" height="2" fill="#fff"/><rect x="1" y="4" width="2" height="2" fill="#fff"/><rect x="1" y="7" width="2" height="2" fill="#fff"/><rect x="1" y="10" width="2" height="2" fill="#fff"/><rect x="1" y="13" width="2" height="2" fill="#fff"/><rect x="4" y="1" width="2" height="2" fill="#fff"/><rect x="4" y="4" width="2" height="2" fill="#fff"/><rect x="4" y="7" width="2" height="2" fill="#fff"/><rect x="4" y="10" width="2" height="2" fill="#fff"/><rect x="4" y="13" width="2" height="2" fill="#fff"/><rect x="7" y="1" width="2" height="2" fill="#fff"/><rect x="7" y="4" width="2" height="2" fill="#fff"/><rect x="7" y="7" width="2" height="2" fill="#fff"/><rect x="7" y="10" width="2" height="2" fill="#fff"/><rect x="7" y="13" width="2" height="2" fill="#fff"/><rect x="10" y="1" width="2" height="2" fill="#fff"/><rect x="10" y="4" width="2" height="2" fill="#fff"/><rect x="10" y="7" width="2" height="2" fill="#fff"/><rect x="10" y="10" width="2" height="2" fill="#fff"/><rect x="10" y="13" width="2" height="2" fill="#fff"/><rect x="13" y="1" width="2" height="2" fill="#fff"/><rect x="13" y="4" width="2" height="2" fill="#fff"/><rect x="13" y="7" width="2" height="2" fill="#fff"/><rect x="13" y="10" width="2" height="2" fill="#fff"/><rect x="13" y="13" width="2" height="2" fill="#fff"/><path d="M3.5 8 L7.5 11.5 L14.5 4" stroke="#0c1c78" stroke-width="2" fill="none"/></svg>
<svg style="left:1575px;top:89px" width="17" height="14" viewBox="0 0 17 14"><rect x="1.5" y="1.5" width="14" height="11" rx="2" fill="#f8ec00" stroke="#d08a3a" stroke-width="1.2"/><path d="M4 4.5h3M8 4.5h5M4 6.5h2M9 6.5h4M4 8.5h4M9 8.5h3M4 10.5h7" stroke="#222" stroke-width="0.9"/></svg>
<div style="left:491px;top:114px;width:1107px;height:1px;background:#fff"></div>
<div style="left:491px;top:114px;width:1px;height:29px;background:#fff"></div>
<div style="left:491px;top:142px;width:1107px;height:1px;background:#a0a0a0"></div>
<div style="left:1597px;top:114px;width:1px;height:29px;background:#a0a0a0"></div>
<div style="left:669px;top:115px;width:1px;height:27px;background:#a0a0a0"></div>
<div style="left:670px;top:115px;width:1px;height:27px;background:#fff"></div>
<div style="left:763px;top:115px;width:1px;height:27px;background:#a0a0a0"></div>
<div style="left:764px;top:115px;width:1px;height:27px;background:#fff"></div>
<div style="left:885px;top:115px;width:1px;height:27px;background:#a0a0a0"></div>
<div style="left:886px;top:115px;width:1px;height:27px;background:#fff"></div>
<div style="left:979px;top:115px;width:1px;height:27px;background:#a0a0a0"></div>
<div style="left:980px;top:115px;width:1px;height:27px;background:#fff"></div>
<div style="left:1045px;top:115px;width:1px;height:27px;background:#a0a0a0"></div>
<div style="left:1046px;top:115px;width:1px;height:27px;background:#fff"></div>
<svg style="left:497px;top:120px" width="18" height="18" viewBox="0 0 18 18"><path d="M1.5 1 V17" stroke="#9a9ab8" stroke-width="1.5"/><rect x="4.5" y="2.5" width="7" height="6" fill="#ffe27a" stroke="#e8b060"/><rect x="4.5" y="10.5" width="10" height="6" fill="#d4d8ea" stroke="#a4a4bc"/></svg>
<svg style="left:526px;top:120px" width="18" height="18" viewBox="0 0 18 18"><path d="M15.5 1 V17" stroke="#9a9ab8" stroke-width="1.5"/><rect x="5.5" y="2.5" width="7" height="6" fill="#ffe27a" stroke="#e8b060"/><rect x="2.5" y="10.5" width="10" height="6" fill="#d4d8ea" stroke="#a4a4bc"/></svg>
<svg style="left:554px;top:120px" width="18" height="18" viewBox="0 0 18 18"><path d="M1 1.5 H18" stroke="#9a9ab8" stroke-width="1.5"/><rect x="2.5" y="4.5" width="6" height="6" fill="#ffe27a" stroke="#e8b060"/><rect x="10.5" y="4.5" width="6" height="10" fill="#d4d8ea" stroke="#a4a4bc"/></svg>
<svg style="left:583px;top:120px" width="18" height="18" viewBox="0 0 18 18"><path d="M1 16.5 H18" stroke="#9a9ab8" stroke-width="1.5"/><rect x="2.5" y="8.5" width="6" height="6" fill="#ffe27a" stroke="#e8b060"/><rect x="10.5" y="4.5" width="6" height="10" fill="#d4d8ea" stroke="#a4a4bc"/></svg>
<svg style="left:612px;top:120px" width="18" height="18" viewBox="0 0 18 18"><path d="M1.5 1 V17 M16.5 1 V17" stroke="#9a9ab8" stroke-width="1.5"/><rect x="4.5" y="2.5" width="9" height="6" fill="#ffe27a" stroke="#e8b060"/><rect x="4.5" y="10.5" width="9" height="6" fill="#d4d8ea" stroke="#a4a4bc"/></svg>
<svg style="left:641px;top:120px" width="18" height="18" viewBox="0 0 18 18"><path d="M1 1.5 H18 M1 16.5 H18" stroke="#9a9ab8" stroke-width="1.5"/><rect x="2.5" y="4.5" width="6" height="10" fill="#ffe27a" stroke="#e8b060"/><rect x="10.5" y="4.5" width="6" height="10" fill="#d4d8ea" stroke="#a4a4bc"/></svg>
<svg style="left:680px;top:120px" width="18" height="18" viewBox="0 0 18 18"><path d="M1 9.5 H7 M5 7 L7.5 9.5 L5 12" stroke="#8890b8" stroke-width="1.5" fill="none"/><rect x="9.5" y="6.5" width="6" height="6" fill="#d4d8ea" stroke="#a4a4bc"/></svg>
<svg style="left:708px;top:120px" width="18" height="18" viewBox="0 0 18 18"><path d="M8.5 1 V7 M6 5 L8.5 7.5 L11 5" stroke="#8890b8" stroke-width="1.5" fill="none"/><rect x="5.5" y="9.5" width="6" height="6" fill="#d4d8ea" stroke="#a4a4bc"/></svg>
<svg style="left:736px;top:120px" width="18" height="18" viewBox="0 0 18 18"><path d="M2 3 L8 9 M4.5 9 H8.5 V5" stroke="#8890b8" stroke-width="1.5" fill="none"/><rect x="9.5" y="9.5" width="6" height="6" fill="#d4d8ea" stroke="#a4a4bc"/></svg>
<svg style="left:773px;top:120px" width="18" height="18" viewBox="0 0 18 18"><circle cx="6.5" cy="7.5" r="3.6" fill="none" stroke="#c4c4c4" stroke-width="2.2" stroke-dasharray="1.4 0.9"/><circle cx="6.5" cy="7.5" r="1.3" fill="none" stroke="#c4c4c4" stroke-width="0.8"/><g transform="translate(10,7)"><path d="M4 0.5 V7 M0.5 3.5 H7.5 M0.5 9.5 H7.5" stroke="#c8a860" stroke-width="2.6"/><path d="M4 1 V6.5 M1 3.5 H7 M1 9.5 H7" stroke="#fff0a8" stroke-width="1.1"/></g></svg>
<svg style="left:801px;top:120px" width="18" height="18" viewBox="0 0 18 18"><circle cx="7" cy="7.5" r="3.3" fill="none" stroke="#c8c8c8" stroke-width="1.8"/><path d="M2.5 3 L11 11.5 M11 3 L2.5 11.5" stroke="#e88c8c" stroke-width="2.2"/><g transform="translate(10,7)"><path d="M4 0.5 V7 M0.5 3.5 H7.5 M0.5 9.5 H7.5" stroke="#c8a860" stroke-width="2.6"/><path d="M4 1 V6.5 M1 3.5 H7 M1 9.5 H7" stroke="#fff0a8" stroke-width="1.1"/></g></svg>
<svg style="left:831px;top:120px" width="18" height="18" viewBox="0 0 18 18"><path d="M5 3 L12 3 L8.5 6.5 L11 6.5 L3 13 L5.5 8 L2 8 Z" fill="#f8e070" stroke="#e0b840" stroke-width="0.7"/><g transform="translate(10,7)"><path d="M4 0.5 V7 M0.5 3.5 H7.5 M0.5 9.5 H7.5" stroke="#c8a860" stroke-width="2.6"/><path d="M4 1 V6.5 M1 3.5 H7 M1 9.5 H7" stroke="#fff0a8" stroke-width="1.1"/></g></svg>
<svg style="left:859px;top:120px" width="18" height="18" viewBox="0 0 18 18"><path d="M2.5 3.5 H10.5 V10 H2.5 Q1 11.5 1 12 Z" fill="#eef4fc" stroke="#b8cce8"/><g transform="translate(10,7)"><path d="M4 0.5 V7 M0.5 3.5 H7.5 M0.5 9.5 H7.5" stroke="#c8a860" stroke-width="2.6"/><path d="M4 1 V6.5 M1 3.5 H7 M1 9.5 H7" stroke="#fff0a8" stroke-width="1.1"/></g></svg>
<svg style="left:894px;top:120px" width="18" height="18" viewBox="0 0 18 18"><rect x="1.5" y="3.5" width="8" height="5" fill="#d4d8ea" stroke="#a4a4bc"/><path d="M5.5 1 V3" stroke="#d04040" stroke-width="1.5"/><g transform="translate(10,7)"><path d="M4 0.5 V7 M0.5 3.5 H7.5 M0.5 9.5 H7.5" stroke="#c8a860" stroke-width="2.6"/><path d="M4 1 V6.5 M1 3.5 H7 M1 9.5 H7" stroke="#fff0a8" stroke-width="1.1"/></g></svg>
<svg style="left:923px;top:120px" width="18" height="18" viewBox="0 0 18 18"><rect x="1.5" y="2.5" width="8" height="5" fill="#d4d8ea" stroke="#a4a4bc"/><path d="M5.5 7 V10" stroke="#d04040" stroke-width="1.5"/><g transform="translate(10,7)"><path d="M4 0.5 V7 M0.5 3.5 H7.5 M0.5 9.5 H7.5" stroke="#c8a860" stroke-width="2.6"/><path d="M4 1 V6.5 M1 3.5 H7 M1 9.5 H7" stroke="#fff0a8" stroke-width="1.1"/></g></svg>
<svg style="left:956px;top:120px" width="18" height="18" viewBox="0 0 18 18"><rect x="0.5" y="1.5" width="7" height="3" fill="#d4d8ea" stroke="#a4a4bc"/><rect x="0.5" y="11.5" width="7" height="3" fill="#d4d8ea" stroke="#a4a4bc"/><path d="M4 4.5 V11.5" stroke="#e07878" stroke-width="1"/></svg>
<svg style="left:990px;top:120px" width="18" height="18" viewBox="0 0 18 18"><rect x="1.5" y="5.5" width="3" height="7" fill="#d4d8ea" stroke="#a4a4bc"/><rect x="11.5" y="5.5" width="3" height="7" fill="#d4d8ea" stroke="#a4a4bc"/><path d="M5 9 H11" stroke="#a4a4bc" stroke-width="1"/><path d="M6.5 7 L9.5 11 M9.5 7 L6.5 11" stroke="#e07878" stroke-width="0.9"/></svg>
<svg style="left:1018px;top:120px" width="18" height="18" viewBox="0 0 18 18"><rect x="1.5" y="2.5" width="3" height="6" fill="#d4d8ea" stroke="#a4a4bc"/><rect x="12.5" y="5.5" width="3" height="7" fill="#d4d8ea" stroke="#a4a4bc"/><path d="M5 6.5 H8.5 V9.5 H12" stroke="#9a9aae" fill="none"/><text x="8" y="6" font-size="7" font-family="Liberation Sans" fill="#e07878">?</text></svg>
<svg style="left:1055px;top:120px" width="18" height="18" viewBox="0 0 18 18"><rect x="1.5" y="2.5" width="3" height="7" fill="#d4d8ea" stroke="#a4a4bc"/><rect x="12.5" y="8.5" width="3" height="7" fill="#d4d8ea" stroke="#a4a4bc"/><path d="M4 5 L12 13" stroke="#8890b8" fill="none" stroke-width="1.2"/></svg>
<svg style="left:1083px;top:120px" width="18" height="18" viewBox="0 0 18 18"><rect x="1.5" y="2.5" width="3" height="7" fill="#d4d8ea" stroke="#a4a4bc"/><rect x="12.5" y="8.5" width="3" height="7" fill="#d4d8ea" stroke="#a4a4bc"/><path d="M4 5 H7 L12 10" stroke="#8890b8" fill="none" stroke-width="1.2"/></svg>
<svg style="left:1111px;top:120px" width="18" height="18" viewBox="0 0 18 18"><rect x="1.5" y="2.5" width="3" height="7" fill="#d4d8ea" stroke="#a4a4bc"/><rect x="12.5" y="8.5" width="3" height="7" fill="#d4d8ea" stroke="#a4a4bc"/><path d="M4 6 H7 V11 H12" stroke="#8890b8" fill="none" stroke-width="1.2"/></svg>
<svg style="left:1139px;top:120px" width="18" height="18" viewBox="0 0 18 18"><rect x="1.5" y="2.5" width="3" height="7" fill="#d4d8ea" stroke="#a4a4bc"/><rect x="12.5" y="8.5" width="3" height="7" fill="#d4d8ea" stroke="#a4a4bc"/><path d="M4 6 H6 V12 L9 7 V11 H12" stroke="#8890b8" fill="none" stroke-width="1.2"/></svg>
<svg style="left:1167px;top:120px" width="18" height="18" viewBox="0 0 18 18"><rect x="1.5" y="2.5" width="3" height="7" fill="#d4d8ea" stroke="#a4a4bc"/><rect x="12.5" y="8.5" width="3" height="7" fill="#d4d8ea" stroke="#a4a4bc"/><path d="M4 6 H8 V11 H12" stroke="#8890b8" fill="none" stroke-width="1.2"/></svg>
<div style="left:492px;top:145px;width:1088px;height:927px;background:#fff"></div>
<div style="left:491px;top:144px;width:1107px;height:1px;background:#a0a0a0"></div>
<div style="left:491px;top:144px;width:1px;height:946px;background:#a0a0a0"></div>
<svg style="left:498px;top:150px" width="12" height="14" viewBox="0 0 12 14"><rect x="1" y="2" width="4" height="3" fill="#0a6060"/><path d="M5 3.5 H10" stroke="#0a6060" stroke-width="1"/><path d="M7.5 5.5 L11 9 L7.5 12.5 L4 9 Z" fill="#fff" stroke="#000" stroke-width="1"/><path d="M7.5 7 V11 M5.5 9 H9.5" stroke="#000" stroke-width="1"/></svg>
<svg style="left:514px;top:150px" width="14" height="14" viewBox="0 0 14 14"><path d="M2 2 L11 11 M11 2 L2 11" stroke="#f08080" stroke-width="2"/></svg>
<svg style="left:813px;top:186px" width="11" height="11" viewBox="0 0 11 11"><polygon points="5.50,0.50 6.88,2.17 9.04,1.96 8.83,4.12 10.50,5.50 8.83,6.88 9.04,9.04 6.88,8.83 5.50,10.50 4.12,8.83 1.96,9.04 2.17,6.88 0.50,5.50 2.17,4.12 1.96,1.96 4.12,2.17" fill="#e0e0e0" stroke="#6a6a6a" stroke-width="1"/><circle cx="5.5" cy="5.5" r="2" fill="#fff" stroke="#5a5a5a" stroke-width="1"/></svg>
<svg style="left:686px;top:270px" width="13" height="21" viewBox="0 0 13 21"><path d="M0.5 0.5 L0.5 16.5 L4.5 12.5 L8 20.5 L10.5 19.5 L7.5 11.5 L12 11.5 Z" fill="#fff" stroke="#000" stroke-width="1.1" stroke-linejoin="miter"/></svg>
<svg class="dg" width="1600" height="1148" viewBox="0 0 1600 1148">
<g shape-rendering="crispEdges" fill="#000">
<rect x="852" y="264" width="1" height="38" fill="#000"/>
<rect x="850" y="272" width="5" height="1" fill="#000"/>
<rect x="851" y="273" width="3" height="1" fill="#000"/>
<rect x="850" y="299" width="5" height="1" fill="#000"/>
<rect x="851" y="300" width="3" height="1" fill="#000"/>
<rect x="852" y="396" width="1" height="50" fill="#000"/>
<rect x="850" y="404" width="5" height="1" fill="#000"/>
<rect x="851" y="405" width="3" height="1" fill="#000"/>
<rect x="850" y="443" width="5" height="1" fill="#000"/>
<rect x="851" y="444" width="3" height="1" fill="#000"/>
<rect x="852" y="540" width="1" height="50" fill="#000"/>
<rect x="850" y="548" width="5" height="1" fill="#000"/>
<rect x="851" y="549" width="3" height="1" fill="#000"/>
<rect x="850" y="587" width="5" height="1" fill="#000"/>
<rect x="851" y="588" width="3" height="1" fill="#000"/>
<rect x="852" y="668" width="1" height="38" fill="#000"/>
<rect x="850" y="676" width="5" height="1" fill="#000"/>
<rect x="851" y="677" width="3" height="1" fill="#000"/>
<rect x="850" y="703" width="5" height="1" fill="#000"/>
<rect x="851" y="704" width="3" height="1" fill="#000"/>
<rect x="852" y="784" width="1" height="38" fill="#000"/>
<rect x="850" y="792" width="5" height="1" fill="#000"/>
<rect x="851" y="793" width="3" height="1" fill="#000"/>
<rect x="850" y="819" width="5" height="1" fill="#000"/>
<rect x="851" y="820" width="3" height="1" fill="#000"/>
<rect x="852" y="900" width="1" height="38" fill="#000"/>
<rect x="850" y="908" width="5" height="1" fill="#000"/>
<rect x="851" y="909" width="3" height="1" fill="#000"/>
<rect x="850" y="935" width="5" height="1" fill="#000"/>
<rect x="851" y="936" width="3" height="1" fill="#000"/>
<rect x="1220" y="280" width="1" height="34" fill="#000"/>
<rect x="1218" y="288" width="5" height="1" fill="#000"/>
<rect x="1219" y="289" width="3" height="1" fill="#000"/>
<rect x="1218" y="311" width="5" height="1" fill="#000"/>
<rect x="1219" y="312" width="3" height="1" fill="#000"/>
<rect x="1220" y="392" width="1" height="38" fill="#000"/>
<rect x="1218" y="400" width="5" height="1" fill="#000"/>
<rect x="1219" y="401" width="3" height="1" fill="#000"/>
<rect x="1218" y="427" width="5" height="1" fill="#000"/>
<rect x="1219" y="428" width="3" height="1" fill="#000"/>
<rect x="1220" y="500" width="1" height="18" fill="#000"/>
<rect x="1218" y="508" width="5" height="1" fill="#000"/>
<rect x="1219" y="509" width="3" height="1" fill="#000"/>
<rect x="1218" y="515" width="5" height="1" fill="#000"/>
<rect x="1219" y="516" width="3" height="1" fill="#000"/>
<rect x="1220" y="596" width="1" height="38" fill="#000"/>
<rect x="1218" y="604" width="5" height="1" fill="#000"/>
<rect x="1219" y="605" width="3" height="1" fill="#000"/>
<rect x="1218" y="631" width="5" height="1" fill="#000"/>
<rect x="1219" y="632" width="3" height="1" fill="#000"/>
<rect x="1220" y="712" width="1" height="38" fill="#000"/>
<rect x="1218" y="720" width="5" height="1" fill="#000"/>
<rect x="1219" y="721" width="3" height="1" fill="#000"/>
<rect x="1218" y="747" width="5" height="1" fill="#000"/>
<rect x="1219" y="748" width="3" height="1" fill="#000"/>
<rect x="1220" y="820" width="1" height="18" fill="#000"/>
<rect x="1218" y="828" width="5" height="1" fill="#000"/>
<rect x="1219" y="829" width="3" height="1" fill="#000"/>
<rect x="1218" y="835" width="5" height="1" fill="#000"/>
<rect x="1219" y="836" width="3" height="1" fill="#000"/>
<rect x="1220" y="916" width="1" height="38" fill="#000"/>
<rect x="1218" y="924" width="5" height="1" fill="#000"/>
<rect x="1219" y="925" width="3" height="1" fill="#000"/>
<rect x="1218" y="951" width="5" height="1" fill="#000"/>
<rect x="1219" y="952" width="3" height="1" fill="#000"/>
<rect x="852" y="1032" width="1" height="22" fill="#000"/>
<rect x="852" y="1053" width="101" height="1" fill="#000"/>
<rect x="952" y="169" width="1" height="885" fill="#000"/>
<rect x="952" y="169" width="269" height="1" fill="#000"/>
<rect x="1220" y="169" width="1" height="17" fill="#000"/>
<rect x="850" y="1040" width="5" height="1" fill="#000"/>
<rect x="851" y="1041" width="3" height="1" fill="#000"/>
<rect x="1218" y="183" width="5" height="1" fill="#000"/>
<rect x="1219" y="184" width="3" height="1" fill="#000"/>
<rect x="1220" y="1032" width="1" height="22" fill="#000"/>
<rect x="1220" y="1053" width="101" height="1" fill="#000"/>
<rect x="1320" y="177" width="1" height="877" fill="#000"/>
<rect x="1320" y="177" width="157" height="1" fill="#000"/>
<rect x="1476" y="177" width="1" height="17" fill="#000"/>
<rect x="1218" y="1040" width="5" height="1" fill="#000"/>
<rect x="1219" y="1041" width="3" height="1" fill="#000"/>
<rect x="1474" y="191" width="5" height="1" fill="#000"/>
<rect x="1475" y="192" width="3" height="1" fill="#000"/>
<rect x="828" y="185" width="104" height="80" fill="#000"/>
<rect x="829" y="186" width="102" height="26" fill="#647c8e"/>
<rect x="829" y="213" width="102" height="51" fill="#e9edf0"/>
<rect x="818" y="223" width="5" height="5" fill="#000"/>
<rect x="823" y="225" width="5" height="1" fill="#000"/>
<rect x="708" y="217" width="110" height="15" fill="#000"/>
<rect x="709" y="218" width="108" height="13" fill="#fff"/>
<rect x="818" y="239" width="5" height="5" fill="#000"/>
<rect x="823" y="241" width="5" height="1" fill="#000"/>
<rect x="828" y="301" width="104" height="96" fill="#000"/>
<rect x="829" y="302" width="102" height="26" fill="#647c8e"/>
<rect x="829" y="329" width="102" height="67" fill="#e9edf0"/>
<rect x="818" y="335" width="5" height="5" fill="#000"/>
<rect x="823" y="337" width="5" height="1" fill="#000"/>
<rect x="727" y="329" width="91" height="15" fill="#000"/>
<rect x="728" y="330" width="89" height="13" fill="#fff"/>
<rect x="818" y="351" width="5" height="5" fill="#000"/>
<rect x="823" y="353" width="5" height="1" fill="#000"/>
<rect x="818" y="367" width="5" height="5" fill="#000"/>
<rect x="823" y="369" width="5" height="1" fill="#000"/>
<rect x="765" y="361" width="53" height="15" fill="#000"/>
<rect x="766" y="362" width="51" height="13" fill="#fff"/>
<rect x="828" y="445" width="104" height="96" fill="#000"/>
<rect x="829" y="446" width="102" height="26" fill="#647c8e"/>
<rect x="829" y="473" width="102" height="67" fill="#e9edf0"/>
<rect x="818" y="479" width="5" height="5" fill="#000"/>
<rect x="823" y="481" width="5" height="1" fill="#000"/>
<rect x="726" y="473" width="92" height="15" fill="#000"/>
<rect x="727" y="474" width="90" height="13" fill="#fff"/>
<rect x="818" y="495" width="5" height="5" fill="#000"/>
<rect x="823" y="497" width="5" height="1" fill="#000"/>
<rect x="818" y="511" width="5" height="5" fill="#000"/>
<rect x="823" y="513" width="5" height="1" fill="#000"/>
<rect x="800" y="505" width="18" height="15" fill="#000"/>
<rect x="801" y="506" width="16" height="13" fill="#fff"/>
<rect x="828" y="589" width="104" height="80" fill="#000"/>
<rect x="829" y="590" width="102" height="26" fill="#647c8e"/>
<rect x="829" y="617" width="102" height="51" fill="#e9edf0"/>
<rect x="818" y="623" width="5" height="5" fill="#000"/>
<rect x="823" y="625" width="5" height="1" fill="#000"/>
<rect x="689" y="617" width="129" height="15" fill="#000"/>
<rect x="690" y="618" width="127" height="13" fill="#fff"/>
<rect x="818" y="639" width="5" height="5" fill="#000"/>
<rect x="823" y="641" width="5" height="1" fill="#000"/>
<rect x="828" y="705" width="104" height="80" fill="#000"/>
<rect x="829" y="706" width="102" height="26" fill="#647c8e"/>
<rect x="829" y="733" width="102" height="51" fill="#e9edf0"/>
<rect x="818" y="743" width="5" height="5" fill="#000"/>
<rect x="823" y="745" width="5" height="1" fill="#000"/>
<rect x="732" y="737" width="86" height="15" fill="#000"/>
<rect x="733" y="738" width="84" height="13" fill="#fff"/>
<rect x="818" y="759" width="5" height="5" fill="#000"/>
<rect x="823" y="761" width="5" height="1" fill="#000"/>
<rect x="828" y="821" width="104" height="80" fill="#000"/>
<rect x="829" y="822" width="102" height="26" fill="#647c8e"/>
<rect x="829" y="849" width="102" height="51" fill="#e9edf0"/>
<rect x="818" y="855" width="5" height="5" fill="#000"/>
<rect x="823" y="857" width="5" height="1" fill="#000"/>
<rect x="755" y="849" width="63" height="15" fill="#000"/>
<rect x="756" y="850" width="61" height="13" fill="#fff"/>
<rect x="818" y="871" width="5" height="5" fill="#000"/>
<rect x="823" y="873" width="5" height="1" fill="#000"/>
<rect x="828" y="937" width="104" height="96" fill="#000"/>
<rect x="829" y="938" width="102" height="26" fill="#647c8e"/>
<rect x="829" y="965" width="102" height="67" fill="#e9edf0"/>
<rect x="818" y="975" width="5" height="5" fill="#000"/>
<rect x="823" y="977" width="5" height="1" fill="#000"/>
<rect x="718" y="969" width="100" height="15" fill="#000"/>
<rect x="719" y="970" width="98" height="13" fill="#fff"/>
<rect x="818" y="991" width="5" height="5" fill="#000"/>
<rect x="823" y="993" width="5" height="1" fill="#000"/>
<rect x="818" y="1007" width="5" height="5" fill="#000"/>
<rect x="823" y="1009" width="5" height="1" fill="#000"/>
<rect x="743" y="1001" width="75" height="15" fill="#000"/>
<rect x="744" y="1002" width="73" height="13" fill="#fff"/>
<rect x="1196" y="185" width="104" height="96" fill="#000"/>
<rect x="1197" y="186" width="102" height="26" fill="#647c8e"/>
<rect x="1197" y="213" width="102" height="67" fill="#e9edf0"/>
<rect x="1186" y="223" width="5" height="5" fill="#000"/>
<rect x="1191" y="225" width="5" height="1" fill="#000"/>
<rect x="1118" y="217" width="68" height="15" fill="#000"/>
<rect x="1119" y="218" width="66" height="13" fill="#fff"/>
<rect x="1186" y="239" width="5" height="5" fill="#000"/>
<rect x="1191" y="241" width="5" height="1" fill="#000"/>
<rect x="1186" y="255" width="5" height="5" fill="#000"/>
<rect x="1191" y="257" width="5" height="1" fill="#000"/>
<rect x="1086" y="249" width="100" height="15" fill="#000"/>
<rect x="1087" y="250" width="98" height="13" fill="#fff"/>
<rect x="1196" y="313" width="104" height="80" fill="#000"/>
<rect x="1197" y="314" width="102" height="26" fill="#647c8e"/>
<rect x="1197" y="341" width="102" height="51" fill="#e9edf0"/>
<rect x="1186" y="351" width="5" height="5" fill="#000"/>
<rect x="1191" y="353" width="5" height="1" fill="#000"/>
<rect x="1131" y="345" width="55" height="15" fill="#000"/>
<rect x="1132" y="346" width="53" height="13" fill="#fff"/>
<rect x="1186" y="367" width="5" height="5" fill="#000"/>
<rect x="1191" y="369" width="5" height="1" fill="#000"/>
<rect x="1196" y="429" width="104" height="72" fill="#000"/>
<rect x="1197" y="430" width="102" height="26" fill="#647c8e"/>
<rect x="1197" y="457" width="102" height="43" fill="#e9edf0"/>
<rect x="1186" y="463" width="5" height="5" fill="#000"/>
<rect x="1191" y="465" width="5" height="1" fill="#000"/>
<rect x="961" y="457" width="225" height="15" fill="#000"/>
<rect x="962" y="458" width="223" height="13" fill="#fff"/>
<rect x="1186" y="479" width="5" height="5" fill="#000"/>
<rect x="1191" y="481" width="5" height="1" fill="#000"/>
<rect x="1196" y="517" width="104" height="80" fill="#000"/>
<rect x="1197" y="518" width="102" height="26" fill="#647c8e"/>
<rect x="1197" y="545" width="102" height="51" fill="#e9edf0"/>
<rect x="1186" y="551" width="5" height="5" fill="#000"/>
<rect x="1191" y="553" width="5" height="1" fill="#000"/>
<rect x="1102" y="545" width="84" height="15" fill="#000"/>
<rect x="1103" y="546" width="82" height="13" fill="#fff"/>
<rect x="1186" y="567" width="5" height="5" fill="#000"/>
<rect x="1191" y="569" width="5" height="1" fill="#000"/>
<rect x="1196" y="633" width="104" height="80" fill="#000"/>
<rect x="1197" y="634" width="102" height="26" fill="#647c8e"/>
<rect x="1197" y="661" width="102" height="51" fill="#e9edf0"/>
<rect x="1186" y="671" width="5" height="5" fill="#000"/>
<rect x="1191" y="673" width="5" height="1" fill="#000"/>
<rect x="1064" y="665" width="122" height="15" fill="#000"/>
<rect x="1065" y="666" width="120" height="13" fill="#fff"/>
<rect x="1186" y="687" width="5" height="5" fill="#000"/>
<rect x="1191" y="689" width="5" height="1" fill="#000"/>
<rect x="1196" y="749" width="104" height="72" fill="#000"/>
<rect x="1197" y="750" width="102" height="26" fill="#647c8e"/>
<rect x="1197" y="777" width="102" height="43" fill="#e9edf0"/>
<rect x="1186" y="783" width="5" height="5" fill="#000"/>
<rect x="1191" y="785" width="5" height="1" fill="#000"/>
<rect x="1126" y="777" width="60" height="15" fill="#000"/>
<rect x="1127" y="778" width="58" height="13" fill="#fff"/>
<rect x="1186" y="799" width="5" height="5" fill="#000"/>
<rect x="1191" y="801" width="5" height="1" fill="#000"/>
<rect x="1196" y="837" width="104" height="80" fill="#000"/>
<rect x="1197" y="838" width="102" height="26" fill="#647c8e"/>
<rect x="1197" y="865" width="102" height="51" fill="#e9edf0"/>
<rect x="1186" y="871" width="5" height="5" fill="#000"/>
<rect x="1191" y="873" width="5" height="1" fill="#000"/>
<rect x="990" y="865" width="196" height="15" fill="#000"/>
<rect x="991" y="866" width="194" height="13" fill="#fff"/>
<rect x="1186" y="887" width="5" height="5" fill="#000"/>
<rect x="1191" y="889" width="5" height="1" fill="#000"/>
<rect x="1196" y="953" width="104" height="80" fill="#000"/>
<rect x="1197" y="954" width="102" height="26" fill="#647c8e"/>
<rect x="1197" y="981" width="102" height="51" fill="#e9edf0"/>
<rect x="1186" y="991" width="5" height="5" fill="#000"/>
<rect x="1191" y="993" width="5" height="1" fill="#000"/>
<rect x="1058" y="985" width="128" height="15" fill="#000"/>
<rect x="1059" y="986" width="126" height="13" fill="#fff"/>
<rect x="1186" y="1007" width="5" height="5" fill="#000"/>
<rect x="1191" y="1009" width="5" height="1" fill="#000"/>
<rect x="1152" y="1001" width="34" height="15" fill="#000"/>
<rect x="1153" y="1002" width="32" height="13" fill="#fff"/>
<rect x="1452" y="193" width="104" height="80" fill="#000"/>
<rect x="1453" y="194" width="102" height="26" fill="#647c8e"/>
<rect x="1453" y="221" width="102" height="51" fill="#e9edf0"/>
<rect x="1442" y="231" width="5" height="5" fill="#000"/>
<rect x="1447" y="233" width="5" height="1" fill="#000"/>
<rect x="1382" y="225" width="60" height="15" fill="#000"/>
<rect x="1383" y="226" width="58" height="13" fill="#fff"/>
<rect x="1442" y="247" width="5" height="5" fill="#000"/>
<rect x="1447" y="249" width="5" height="1" fill="#000"/>
</g>
<g font-family="Liberation Sans, sans-serif" font-size="10.8">
<text x="880.0" y="203" fill="#fff" text-anchor="middle">open</text>
<text x="831" y="229" fill="#000">url</text>
<text x="713" y="228" fill="#ff00ff" textLength="100" lengthAdjust="spacingAndGlyphs">http://localhost:8081/</text>
<text x="831" y="245" fill="#000">_timeout</text>
<text x="880.0" y="319" fill="#fff" text-anchor="middle">type</text>
<text x="831" y="341" fill="#000">locator</text>
<text x="732" y="340" fill="#ff00ff" textLength="81" lengthAdjust="spacingAndGlyphs">name=loginName</text>
<text x="831" y="357" fill="#000">optionalLocator</text>
<text x="831" y="373" fill="#000">value</text>
<text x="770" y="372" fill="#ff00ff" textLength="43" lengthAdjust="spacingAndGlyphs">Tester01</text>
<text x="880.0" y="463" fill="#fff" text-anchor="middle">type</text>
<text x="831" y="485" fill="#000">locator</text>
<text x="731" y="484" fill="#ff00ff" textLength="82" lengthAdjust="spacingAndGlyphs">name=password</text>
<text x="831" y="501" fill="#000">optionalLocator</text>
<text x="831" y="517" fill="#000">value</text>
<text x="805" y="516" fill="#ff00ff" textLength="8" lengthAdjust="spacingAndGlyphs">js</text>
<text x="880.0" y="607" fill="#fff" text-anchor="middle">clickAndWait</text>
<text x="831" y="629" fill="#000">locator</text>
<text x="694" y="628" fill="#ff00ff" textLength="119" lengthAdjust="spacingAndGlyphs">css=input[type=&quot;submit&quot;]</text>
<text x="831" y="645" fill="#000">timeoutMs</text>
<text x="880.0" y="723" fill="#fff" text-anchor="middle">clickAndWait</text>
<text x="831" y="749" fill="#000">locator</text>
<text x="737" y="748" fill="#ff00ff" textLength="76" lengthAdjust="spacingAndGlyphs">link=Test Cases</text>
<text x="831" y="765" fill="#000">timeoutMs</text>
<text x="880.0" y="839" fill="#fff" text-anchor="middle">clickAndWait</text>
<text x="831" y="861" fill="#000">locator</text>
<text x="760" y="860" fill="#ff00ff" textLength="53" lengthAdjust="spacingAndGlyphs">link=Create</text>
<text x="831" y="877" fill="#000">timeoutMs</text>
<text x="880.0" y="955" fill="#fff" text-anchor="middle">type</text>
<text x="831" y="981" fill="#000">locator</text>
<text x="723" y="980" fill="#ff00ff" textLength="90" lengthAdjust="spacingAndGlyphs">id=equipmentName</text>
<text x="831" y="997" fill="#000">optionalLocator</text>
<text x="831" y="1013" fill="#000">value</text>
<text x="748" y="1012" fill="#ff00ff" textLength="65" lengthAdjust="spacingAndGlyphs">Amperemeter</text>
<text x="1248.0" y="203" fill="#fff" text-anchor="middle">type</text>
<text x="1199" y="229" fill="#000">locator</text>
<text x="1123" y="228" fill="#ff00ff" textLength="58" lengthAdjust="spacingAndGlyphs">id=summary</text>
<text x="1199" y="245" fill="#000">optionalLocator</text>
<text x="1199" y="261" fill="#000">value</text>
<text x="1091" y="260" fill="#ff00ff" textLength="90" lengthAdjust="spacingAndGlyphs">Amperemeter - AC</text>
<text x="1248.0" y="331" fill="#fff" text-anchor="middle">clickAndWait</text>
<text x="1199" y="357" fill="#000">locator</text>
<text x="1136" y="356" fill="#ff00ff" textLength="45" lengthAdjust="spacingAndGlyphs">id=create</text>
<text x="1199" y="373" fill="#000">timeoutMs</text>
<text x="1248.0" y="447" fill="#fff" text-anchor="middle">clickAndWait</text>
<text x="1199" y="469" fill="#000">locator</text>
<text x="966" y="468" fill="#ff00ff" textLength="215" lengthAdjust="spacingAndGlyphs">//*[@id='dyn10']/div[2]/table/tbody/tr[2]/td[2]/a</text>
<text x="1199" y="485" fill="#000">timeoutMs</text>
<text x="1248.0" y="535" fill="#fff" text-anchor="middle">clickAndWait</text>
<text x="1199" y="557" fill="#000">locator</text>
<text x="1107" y="556" fill="#ff00ff" textLength="74" lengthAdjust="spacingAndGlyphs">//*[@id='delete']</text>
<text x="1199" y="573" fill="#000">timeoutMs</text>
<text x="1248.0" y="651" fill="#fff" text-anchor="middle">clickAndWait</text>
<text x="1199" y="677" fill="#000">locator</text>
<text x="1069" y="676" fill="#ff00ff" textLength="112" lengthAdjust="spacingAndGlyphs">//input[@value='Delete']</text>
<text x="1199" y="693" fill="#000">timeoutMs</text>
<text x="1248.0" y="767" fill="#fff" text-anchor="middle">waitForAndClick</text>
<text x="1199" y="789" fill="#000">locator</text>
<text x="1131" y="788" fill="#ff00ff" textLength="50" lengthAdjust="spacingAndGlyphs">id=obj-e08</text>
<text x="1199" y="805" fill="#000">_timeout</text>
<text x="1248.0" y="855" fill="#fff" text-anchor="middle">clickAndWait</text>
<text x="1199" y="877" fill="#000">locator</text>
<text x="995" y="876" fill="#ff00ff" textLength="186" lengthAdjust="spacingAndGlyphs">//*[@id='dyn10']/div[1]/div/span[2]/input</text>
<text x="1199" y="893" fill="#000">timeoutMs</text>
<text x="1248.0" y="971" fill="#fff" text-anchor="middle">clickAndWait</text>
<text x="1199" y="997" fill="#000">locator</text>
<text x="1063" y="996" fill="#ff00ff" textLength="118" lengthAdjust="spacingAndGlyphs">css=input[type=&quot;button&quot;]</text>
<text x="1199" y="1013" fill="#000">timeoutMs</text>
<text x="1157" y="1012" fill="#000" textLength="24" lengthAdjust="spacingAndGlyphs">3000</text>
<text x="1504.0" y="211" fill="#fff" text-anchor="middle">clickAndWait</text>
<text x="1455" y="237" fill="#000">locator</text>
<text x="1387" y="236" fill="#ff00ff" textLength="50" lengthAdjust="spacingAndGlyphs">link=logout</text>
<text x="1455" y="253" fill="#000">timeoutMs</text>
</g>
</svg>
<div style="left:1580px;top:145px;width:17px;height:927px;background:linear-gradient(to right,#f4f4f4,#ececec)"></div>
<svg style="left:1585px;top:149px" width="9" height="7" viewBox="0 0 9 7"><path d="M0.5 6 L4.5 1 L8.5 6 Z" fill="#333"/></svg>
<div style="left:1582px;top:161px;width:15px;height:886px;background:linear-gradient(to right,#f2f2f2 0%,#e8e8e8 45%,#dadada 55%,#c4c4c4 100%);border:1px solid #8a8a8a;border-radius:2px"></div>
<svg style="left:1585px;top:1061px" width="9" height="6" viewBox="0 0 9 6"><path d="M0.5 0.5 L4.5 5.5 L8.5 0.5 Z" fill="#333"/></svg>
<div style="left:1587px;top:601px;width:5px;height:1px;background:#555"></div>
<div style="left:1587px;top:603px;width:5px;height:1px;background:#555"></div>
<div style="left:1587px;top:605px;width:5px;height:1px;background:#555"></div>
<div style="left:1587px;top:607px;width:5px;height:1px;background:#555"></div>
<div style="left:492px;top:1072px;width:1088px;height:17px;background:linear-gradient(to bottom,#f4f4f4,#ececec)"></div>
<svg style="left:496px;top:1077px" width="6" height="9" viewBox="0 0 6 9"><path d="M5.5 0.5 L0.5 4.5 L5.5 8.5 Z" fill="#333"/></svg>
<div style="left:508px;top:1074px;width:1005px;height:15px;background:linear-gradient(to bottom,#f2f2f2 0%,#e8e8e8 45%,#dadada 55%,#c4c4c4 100%);border:1px solid #8a8a8a;border-radius:2px"></div>
<div style="left:1007px;top:1079px;width:1px;height:5px;background:#555"></div>
<div style="left:1009px;top:1079px;width:1px;height:5px;background:#555"></div>
<div style="left:1011px;top:1079px;width:1px;height:5px;background:#555"></div>
<div style="left:1013px;top:1079px;width:1px;height:5px;background:#555"></div>
<svg style="left:1569px;top:1077px" width="6" height="9" viewBox="0 0 6 9"><path d="M0.5 0.5 L5.5 4.5 L0.5 8.5 Z" fill="#333"/></svg>
<div style="left:492px;top:1089px;width:1106px;height:2px;background:#fff"></div>
<div style="left:1597px;top:145px;width:1px;height:946px;background:#fff"></div>
<div style="left:918px;top:1095px;width:125px;height:22px;background:#f0f0f0;border-top:1px solid #e3e3e3;border-left:1px solid #e3e3e3;border-right:1px solid #000;border-bottom:1px solid #000;box-shadow:inset 1px 1px 0 #fff, inset -1px -1px 0 #a0a0a0"></div>
<div style="left:918px;top:1098px;width:125px;height:16px;text-align:center;line-height:16px;color:#8a8a8a;white-space:pre;font-size:12px">Übernehmen</div>
<div style="left:1046px;top:1095px;width:125px;height:22px;background:#f0f0f0;border-top:1px solid #e3e3e3;border-left:1px solid #e3e3e3;border-right:1px solid #000;border-bottom:1px solid #000;box-shadow:inset 1px 1px 0 #fff, inset -1px -1px 0 #a0a0a0"></div>
<div style="left:1046px;top:1098px;width:125px;height:16px;text-align:center;line-height:16px;color:#8a8a8a;white-space:pre;font-size:12px">Verwerfen</div>
<div style="left:0px;top:1124px;width:1573px;height:1px;background:#999"></div>
<div style="left:1574px;top:1124px;width:25px;height:1px;background:#999"></div>
<div style="left:0px;top:1124px;width:1px;height:24px;background:#999"></div>
<div style="left:782px;top:1124px;width:10px;height:24px;background:#f0f0f0"></div>
<div style="left:791px;top:1124px;width:1px;height:24px;background:#999"></div>
<div style="left:1548px;top:1124px;width:1px;height:24px;background:#999"></div>
<div style="left:1574px;top:1124px;width:1px;height:24px;background:#999"></div>
<div style="left:794px;top:1131px;width:200px;height:14px;line-height:14px;white-space:pre">expeccoNET example</div>
<svg style="left:14px;top:1142px" width="27" height="6" viewBox="0 0 27 6"><ellipse cx="13" cy="12" rx="12" ry="11" fill="#c8d8e8" stroke="#2a5a90" stroke-width="1.3"/></svg>
</body></html>
